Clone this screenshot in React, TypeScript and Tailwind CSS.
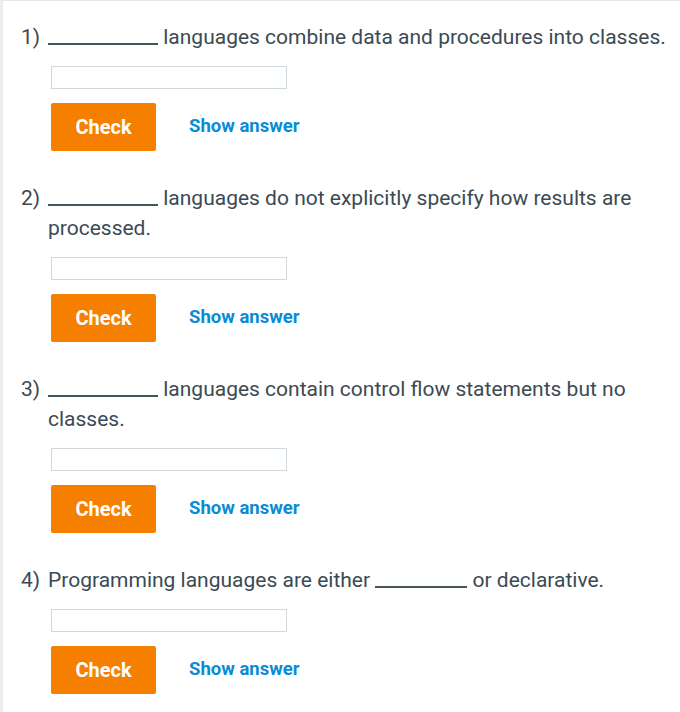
import React from "react";

type Q = { n: string; parts: React.ReactNode };

const Blank = ({ w }: { w: string }) => (
  <span className={`inline-block h-[2px] bg-[#46545c] align-[-1px] ${w}`} />
);

const questions: Q[] = [
  { n: "1)", parts: <><Blank w="w-[110px]" /> languages combine data and procedures into classes.</> },
  { n: "2)", parts: <><Blank w="w-[110px]" /> languages do not explicitly specify how results are processed.</> },
  { n: "3)", parts: <><Blank w="w-[110px]" /> languages contain control flow statements but no classes.</> },
  { n: "4)", parts: <>Programming languages are either <Blank w="w-[92px]" /> or declarative.</> },
];

export default function App() {
  return (
    <div
      className="relative w-[680px] h-[712px] bg-white border-t border-l-[3px] border-t-[#e6e6e6] border-l-[#ededed] overflow-hidden"
      style={{ fontFamily: "Roboto, 'Noto Sans', sans-serif" }}
    >
      <span className="absolute left-[-3px] top-[-1px] w-[3px] h-[2px] bg-[#f57f00]" />
      <div className="flex flex-col gap-[32px] pl-[18px] pr-2 pt-[21px]">
        {questions.map((q) => (
          <div key={q.n} className="flex">
            <div className="w-[27px] shrink-0 text-[21px] leading-[30px] text-[#3b4a53]">{q.n}</div>
            <div className="flex-1 flex flex-col">
              <div className="text-[21px] leading-[30px] text-[#3b4a53] pr-1">{q.parts}</div>
              <input
                type="text"
                className="ml-[3px] mt-[14px] w-[236px] h-[23px] border border-[#cfd8dc] outline-none"
              />
              <div className="flex items-center ml-[3px] mt-[14px]">
                <button className="w-[105px] h-[48px] rounded-[2px] bg-[#f57f00] text-white font-bold text-[20px]">
                  Check
                </button>
                <span className="ml-[33px] text-[#0a8bd6] font-bold text-[18.5px]">Show answer</span>
              </div>
            </div>
          </div>
        ))}
      </div>
    </div>
  );
}
